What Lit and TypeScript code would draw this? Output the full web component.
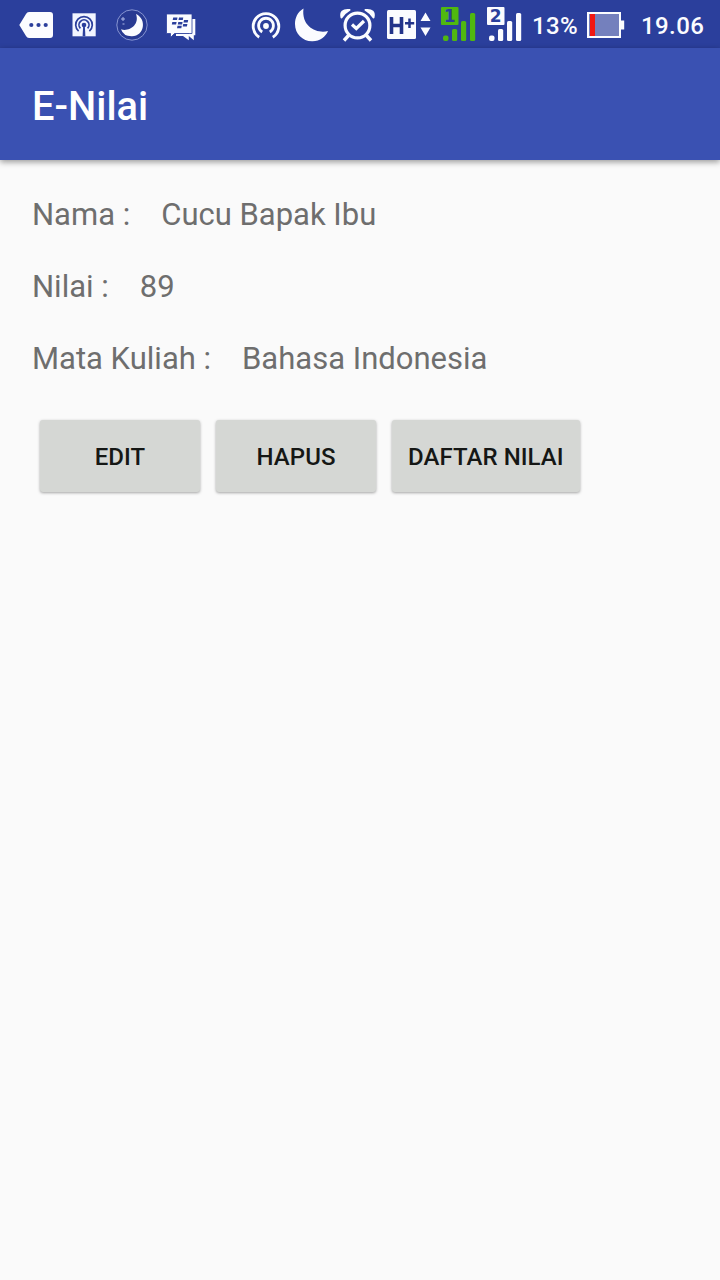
import { LitElement, html, svg, css } from "lit";
import { customElement, property } from "lit/decorators.js";

const WHITE = "#fbfcff";
const BAR = "#2b3f9c";

const signal = (color: string, digit: string) => svg`
  <rect x="5" y="7" width="17.500" height="18" rx="1" fill=${color} />
  <text x="13.7" y="22.3" text-anchor="middle" font-family="DejaVu Sans, sans-serif" font-weight="700" font-size="17" fill=${BAR}>${digit}</text>
  <g fill=${color}>
    <rect x="7" y="35.5" width="5.5" height="5.5" rx="2" />
    <rect x="16" y="29" width="5.2" height="12" rx="1.5" />
    <rect x="25" y="21" width="5.2" height="20" rx="1.5" />
    <rect x="34" y="13" width="5.2" height="28" rx="1.5" />
  </g>`;

const icons: Record<string, { width: number; art: unknown }> = {
  more: {
    width: 60,
    art: svg`<path d="M29 12H50Q53 12 53 15V35Q53 38 50 38H29Q27 38 26 36L19.300 25L26 14Q27 12 29 12Z" fill=${WHITE} />
      <circle cx="31.300" cy="25" r="2.100" fill=${BAR} /><circle cx="38.500" cy="25" r="2.100" fill=${BAR} /><circle cx="45.700" cy="25" r="2.100" fill=${BAR} />`,
  },
  podcast: {
    width: 45,
    art: svg`<rect x="12.500" y="13.300" width="23.200" height="23" fill="#f2f5ff" />
      <g fill="none" stroke=${BAR} stroke-width="1.700">
        <path d="M18.600 31.200A8.300 8.300 0 1 1 29.400 31.200" />
        <path d="M20.400 28.400A5 5 0 1 1 27.600 28.400" />
      </g>
      <circle cx="24" cy="25" r="2.300" fill=${BAR} /><path d="M23.200 25h1.600l.6 11.300h-2.800z" fill=${BAR} />`,
  },
  night: {
    width: 50,
    art: svg`<circle cx="27" cy="25" r="15.200" fill="#283a92" stroke="#8795d2" stroke-width="1" />
      <path d="M31 14C42 19 39.500 36 27 36.300Q18.500 36.500 16 29.300C24 32 35 25 31 14Z" fill=${WHITE} />
      <path d="M18 17v4M16 19h4M17.500 24h2" stroke="#aeb9e7" stroke-width="1" />`,
  },
  messenger: {
    width: 50,
    art: svg`<path d="M34 19h6.300v16.300h-1.500v5l-5-4.300v4.300L28 36h-7v-2h13z" fill=${WHITE} />
      <path d="M11.500 14H37v19.500H19.500L15.500 37.500V33.500H11.500Z" fill=${WHITE} stroke=${BAR} stroke-width="0.800" />
      <g fill=${BAR}>
        <path d="M18.200 17.500h4.300l-.5 2.600h-4.300zM24 17.500h4.300l-.5 2.600h-4.300zM17.300 22h4.300l-.5 2.600h-4.300zM23.300 22h4.300l-.5 2.600h-4.300zM29 20h4.200l-.5 2.600h-4.200zM28.200 24h4.200l-.5 2.600h-4.200zM22.500 25.700h4.300l-.5 2.600H22z" />
      </g>`,
  },
  hotspot: {
    width: 42,
    art: svg`<g fill="none" stroke=${WHITE} stroke-width="2.800">
        <path d="M14.200 37.200A12.800 12.800 0 1 1 27.800 37.200" />
        <path d="M17.200 32A7.400 7.400 0 1 1 24.800 32" />
      </g><circle cx="21" cy="26" r="2.900" fill=${WHITE} />`,
  },
  moon: {
    width: 48,
    art: svg`<path d="M16.500 8.500C10.500 12 8 18 8 24C8 34 15.500 41 25 41.300C33 41.500 38.500 37 41 31C31 34 14 27.500 16.500 8.500Z" fill=${WHITE} />`,
  },
  alarm: {
    width: 46,
    art: svg`<circle cx="22.500" cy="25.500" r="12.400" fill="none" stroke=${WHITE} stroke-width="3.200" />
      <path d="M6.500 17.500Q4.500 9 14.500 10Q10 12.500 6.500 17.500ZM38.500 17.500Q40.500 9 30.500 10Q35 12.500 38.500 17.500Z" fill=${WHITE} stroke=${WHITE} stroke-width="2" stroke-linejoin="round" />
      <path d="M13.500 35.500L9 40.500M31.500 35.500L36 40.500" stroke=${WHITE} stroke-width="3.400" />
      <path d="M17 24.500L21.300 28.500L29 21" fill="none" stroke=${WHITE} stroke-width="3.200" />`,
  },
  hspa: {
    width: 55,
    art: svg`<rect x="6" y="10" width="29" height="29" rx="1.500" fill=${WHITE} />
      <path d="M10.500 17V34M20.500 17V34M10.500 25.500H20.500" fill="none" stroke="#23348a" stroke-width="3.600" />
      <path d="M28.500 18.500V28M24 23.200H33.200" stroke="#23348a" stroke-width="2.500" />
      <path d="M44.500 12.500L49.500 21H39.500ZM44.500 36L49.500 27.500H39.500Z" fill=${WHITE} />`,
  },
  sim1: { width: 46, art: signal("#50b80f", "1") },
  sim2: { width: 45, art: signal(WHITE, "2") },
  battery: {
    width: 40,
    art: svg`<path d="M1 12H35V20.500H38.200V29.500H35V38H1Z" fill=${WHITE} />
      <rect x="3" y="14" width="30" height="22" fill="#7480bd" /><rect x="4" y="14" width="5" height="22" fill="#f01712" />`,
  },
};

@customElement("status-icon")
export class StatusIcon extends LitElement {
  static styles = css`
    :host { display: block; flex: none; height: 48px; }
    svg { display: block; }
  `;
  @property() name = "more";
  render() {
    const { width, art } = icons[this.name];
    return html`<svg width=${width} height="48" viewBox="0 0 ${width} 48" aria-hidden="true">${art}</svg>`;
  }
}

@customElement("app-root")
export class AppRoot extends LitElement {
  static styles = css`
    :host {
      display: block;
      height: 1280px;
      overflow: hidden;
      background: #fafafa;
      font-family: Roboto, sans-serif;
    }
    .status {
      display: flex;
      align-items: center;
      height: 48px;
      background: #2b3f9c;
      color: #fbfcff;
      font-weight: 500;
      white-space: nowrap;
    }
    .group { display: flex; flex: none; height: 48px; }
    .system { margin-left: 40px; }
    .percent { width: 59px; padding-left: 5px; box-sizing: border-box; line-height: 52px; font-size: 24px; letter-spacing: 0.3px; }
    .clock { padding-left: 15px; line-height: 52px; font-size: 24px; letter-spacing: 0.4px; }
    .toolbar {
      display: flex;
      align-items: center;
      height: 112px;
      padding: 6px 32px 0;
      box-sizing: border-box;
      background: #3a51b2;
      color: #fff;
      box-shadow: 0 2px 6px rgba(0, 0, 0, 0.4);
    }
    .title { margin: 0; font-size: 39.8px; font-weight: 500; line-height: 48px; }
    .content { padding: 32px; }
    .row { display: flex; gap: 31px; height: 72px; line-height: 46px; font-size: 31px; color: #6e6e6e; white-space: nowrap; }
    .actions { display: flex; gap: 16px; padding: 12px 8px; }
    .button {
      height: 72px;
      min-width: 160px;
      padding: 2px 16px 0;
      border: 0;
      border-radius: 3px;
      background: #d5d7d4;
      color: #151715;
      font: 500 24px Roboto, sans-serif;
      letter-spacing: 0.05px;
      white-space: nowrap;
      box-shadow: 0 1px 3px rgba(0, 0, 0, 0.35);
    }
  `;

  private fields = [
    ["Nama :", "Cucu Bapak Ibu"],
    ["Nilai :", "89"],
    ["Mata Kuliah :", "Bahasa Indonesia"],
  ];
  private actions = ["EDIT", "HAPUS", "DAFTAR NILAI"];

  private strip(names: string[]) {
    return names.map((n) => html`<status-icon name=${n}></status-icon>`);
  }

  render() {
    return html`
      <div class="status">
        <div class="group">${this.strip(["more", "podcast", "night", "messenger"])}</div>
        <div class="group system">
          ${this.strip(["hotspot", "moon", "alarm", "hspa", "sim1", "sim2"])}
          <span class="percent">13%</span>
          ${this.strip(["battery"])}
          <span class="clock">19.06</span>
        </div>
      </div>
      <header class="toolbar"><h1 class="title">E-Nilai</h1></header>
      <main class="content">
        ${this.fields.map(([k, v]) => html`<div class="row"><span>${k}</span><span>${v}</span></div>`)}
        <div class="actions">${this.actions.map((a) => html`<button class="button">${a}</button>`)}</div>
      </main>
    `;
  }
}
